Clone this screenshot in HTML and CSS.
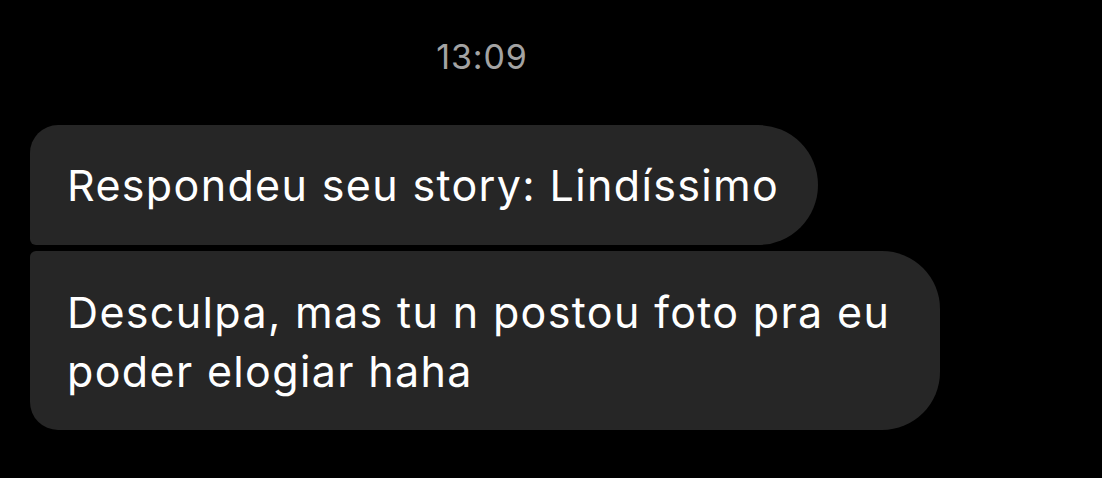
FILE: index.html
```html
<!DOCTYPE html>
<html>
<head>
<meta charset="utf-8">
<link rel="stylesheet" href="styles.css">
</head>
<body>
<div class="chat">
  <div class="time">13:09</div>
  <div class="bubble first">Respondeu seu story: Lindíssimo</div>
  <div class="bubble last">Desculpa, mas tu n postou foto pra eu<br>poder elogiar haha</div>
</div>
</body>
</html>
```
FILE: styles.css
```css
html, body {
  margin: 0;
  background: #000;
  height: 100%;
}
.chat {
  display: flex;
  flex-direction: column;
  align-items: flex-start;
  padding: 38px 30px 0 30px;
  font-family: Inter, "Noto Sans", sans-serif;
}
.time {
  align-self: stretch;
  width: 904px;
  text-align: center;
  color: #a3a3a3;
  font-size: 34px;
  letter-spacing: 0.9px;
  line-height: 38px;
  margin-bottom: 49px;
}
.bubble {
  background: #262626;
  color: #fff;
  font-size: 43px;
  letter-spacing: 1.35px;
  line-height: 59px;
  padding: 0 39px 0 37px;
  box-sizing: border-box;
  white-space: nowrap;
}
.first {
  height: 120px;
  display: flex;
  align-items: center;
  border-radius: 28px 60px 60px 6px;
  margin-bottom: 6px;
}
.last {
  height: 179px;
  padding-top: 32px;
  padding-right: 50px;
  border-radius: 6px 58px 58px 28px;
}
```
